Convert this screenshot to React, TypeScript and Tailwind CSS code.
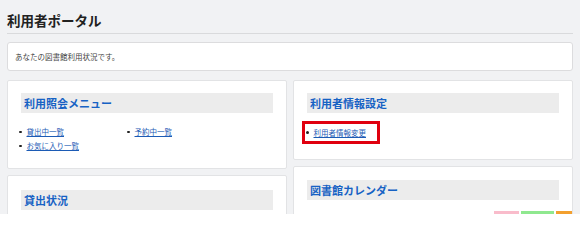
import * as React from "react";

const jp = "font-['Noto_Sans_CJK_JP','Noto_Sans',sans-serif]";

function Midashi({ children }: { children: React.ReactNode }) {
  return (
    <div className="flex h-[20px] items-center bg-[#ececec] pl-[3px]">
      <span className="text-[11px] font-bold leading-none text-[#1762c4]">
        {children}
      </span>
    </div>
  );
}

function Kado({
  className,
  children,
}: {
  className?: string;
  children: React.ReactNode;
}) {
  return (
    <section
      className={`rounded-[2px] border border-[#e2e3e5] bg-white px-[13px] pt-[12px] ${className ?? ""}`}
    >
      {children}
    </section>
  );
}

function Link({ children }: { children: React.ReactNode }) {
  return (
    <li className="flex h-[14px] items-center">
      <span className="mr-[5px] -ml-[2px] h-[2.5px] w-[2.5px] rounded-full bg-[#222]" />
      <a
        href="#"
        className="text-[7.5px] leading-none text-[#1c5bb5] underline underline-offset-[1px]"
      >
        {children}
      </a>
    </li>
  );
}

export default function App() {
  return (
    <div className={`h-[214px] overflow-hidden bg-[#f1f2f4] px-[7px] ${jp}`}>
      <div className="border-b border-[#d9dadc] pt-[10px] pb-[3px]">
        <h1 className="text-[13.5px] font-bold leading-[20px] text-[#222]">
          利用者ポータル
        </h1>
      </div>

      <div className="mt-[8px] flex h-[29px] items-center rounded-[3px] border border-[#dcdcde] bg-white px-[7px]">
        <p className="text-[7.5px] leading-none text-[#444]">
          あなたの図書館利用状況です。
        </p>
      </div>

      <div className="mt-[9px] grid grid-cols-2 items-start gap-[6px]">
        <div className="flex flex-col gap-[6px]">
          <Kado className="pb-[15px]">
            <Midashi>利用照会メニュー</Midashi>
            <ul className="mt-[12px] grid grid-cols-[108px_108px]">
              <Link>貸出中一覧</Link>
              <Link>予約中一覧</Link>
              <Link>お気に入り一覧</Link>
            </ul>
          </Kado>
          <Kado className="h-[90px]">
            <div className="pt-[2px]">
              <Midashi>貸出状況</Midashi>
            </div>
          </Kado>
        </div>

        <div className="flex flex-col gap-[6px]">
          <Kado className="pb-[15px]">
            <Midashi>利用者情報設定</Midashi>
            <div className="mt-[8px] -ml-[5px] inline-flex h-[23px] items-center border-[3px] border-[#e0000f] pr-[11px] pl-[3px]">
              <ul>
                <Link>利用者情報変更</Link>
              </ul>
            </div>
          </Kado>
          <Kado className="h-[90px] overflow-hidden">
            <div className="pt-[1px]">
              <Midashi>図書館カレンダー</Midashi>
            </div>
            <div className="-mr-[13px] mt-[11px] flex justify-end gap-[2px]">
              <div className="h-[10px] w-[25px] bg-[#f9bccb]" />
              <div className="h-[10px] w-[33px] bg-[#8fe88f]" />
              <div className="h-[10px] w-[16px] bg-[#f3a02f]" />
            </div>
          </Kado>
        </div>
      </div>
    </div>
  );
}
